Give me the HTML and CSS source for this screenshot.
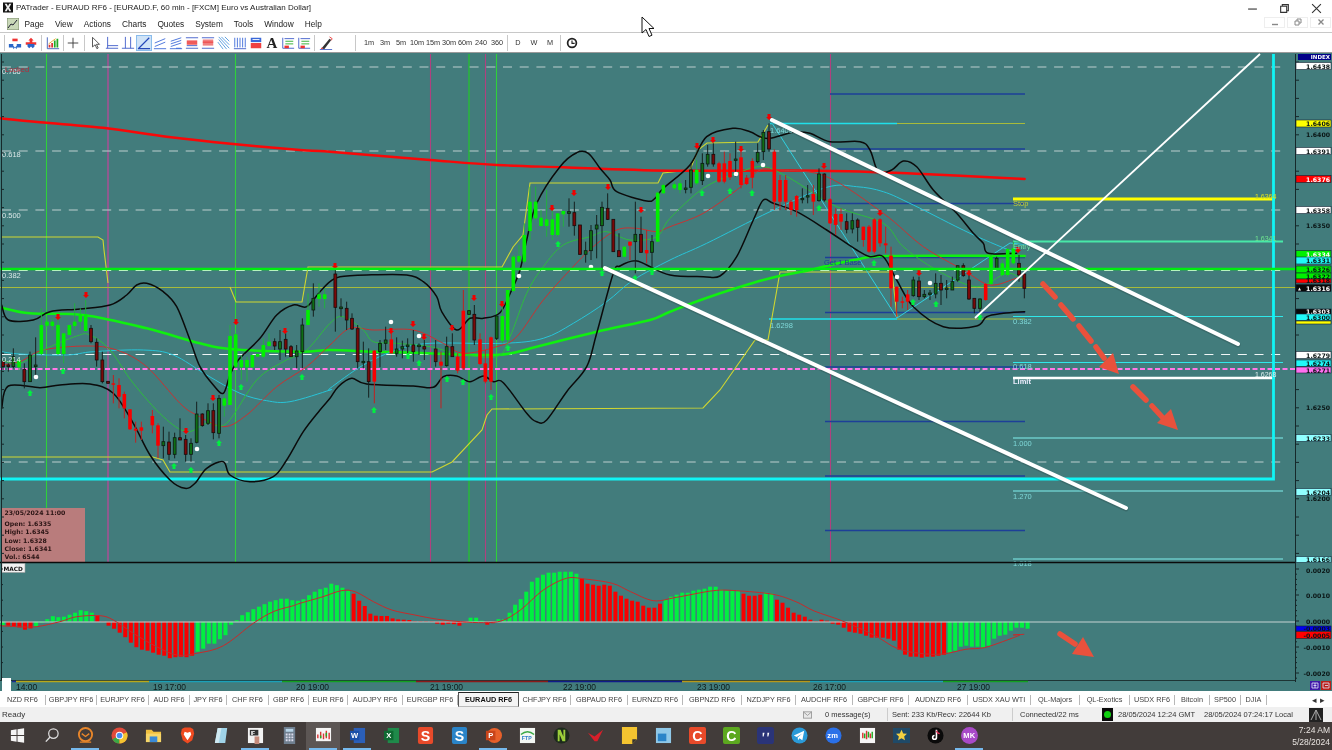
FILE: index.html
```html
<!DOCTYPE html>
<html lang="en">
<head>
<meta charset="utf-8">
<title>PATrader - EURAUD RF6</title>
<link rel="stylesheet" href="styles.css">
</head>
<body>
<div class="app">
  <header class="titlebar">
    <svg class="app-icon" viewBox="0 0 12 12"><rect width="12" height="12" fill="#111"/><path d="M2 1.5h2.6L6 4.4 7.4 1.5H10L7.4 6 10 10.5H7.4L6 7.6 4.6 10.5H2L4.6 6z" fill="#eee"/></svg>
    <span class="title-text">PATrader - EURAUD RF6 - [EURAUD.F, 60 min - [FXCM] Euro vs Australian Dollar]</span>
    <div class="win-ctrls">
      <svg viewBox="0 0 10 10" class="wc"><path d="M1 5.5h8" stroke="#333" stroke-width="1"/></svg>
      <svg viewBox="0 0 10 10" class="wc"><path d="M1.5 3h5.5v5.5H1.500zM3 3V1.500h5.500V7H7" fill="none" stroke="#333"/></svg>
      <svg viewBox="0 0 10 10" class="wc"><path d="M1 1l8 8M9 1l-8 8" stroke="#333" stroke-width="1"/></svg>
    </div>
  </header>

  <nav class="menubar">
    <svg class="menu-icon" viewBox="0 0 12 12"><rect width="12" height="12" fill="#c9d8b8" stroke="#7a8a6a"/><path d="M1 10l3-4 2 1 4-5" fill="none" stroke="#223" stroke-width="1"/></svg>
    <span class="menu-item">Page</span>
    <span class="menu-item">View</span>
    <span class="menu-item">Actions</span>
    <span class="menu-item">Charts</span>
    <span class="menu-item">Quotes</span>
    <span class="menu-item">System</span>
    <span class="menu-item">Tools</span>
    <span class="menu-item">Window</span>
    <span class="menu-item">Help</span>
    <div class="mdi-ctrls">
      <span class="mdi"><svg viewBox="0 0 8 8"><path d="M1 6.500h6" stroke="#888" stroke-width="1.400"/></svg></span>
      <span class="mdi"><svg viewBox="0 0 8 8"><path d="M1 3h4v4H1zM3 3V1h4v4H5" fill="none" stroke="#888"/></svg></span>
      <span class="mdi"><svg viewBox="0 0 8 8"><path d="M1.500 1.500l5 5M6.500 1.500l-5 5" stroke="#888" stroke-width="1.300"/></svg></span>
    </div>
  </nav>

  <div class="toolbar">
    <i class="sep s-first"></i>
    <span class="tb"><svg viewBox="0 0 16 16"><path d="M5 3h6v3H5z" fill="#e33"/><path d="M1 9h5v2l2 2-2 2v-2H1zM15 9h-5v2l-2 2 2 2v-2h5z" fill="#2a66c8"/></svg></span>
    <span class="tb"><svg viewBox="0 0 16 16"><path d="M8 2l3 3H9.500v2H14v3H2V7h4.500V5H5z" fill="#e33"/><path d="M4 9h8v3l-2 2-2-2-2 2-2-2z" fill="#2a66c8"/></svg></span>
    <i class="sep s-a"></i>
    <span class="tb"><svg viewBox="0 0 16 16"><path d="M1.500 1.500V14.500H15" fill="none" stroke="#3a58b8"/><path d="M3 13V10h2v3zM6 13V8h2v5z" fill="#d33"/><path d="M9 13V5h2v8zM12 13V3h2v10z" fill="#2a2"/><path d="M3 9l4-3 4-3" stroke="#e8a020" fill="none"/></svg></span>
    <i class="sep s-b"></i>
    <span class="tb"><svg viewBox="0 0 16 16"><path d="M8 2v12M2 8h12" stroke="#333" stroke-width="1"/></svg></span>
    <i class="sep s-c"></i>
    <span class="tb"><svg viewBox="0 0 16 16"><path d="M4 1.500v11l3-2.500 2 4.500 1.500-.8-2-4.200h3.500z" fill="#fff" stroke="#444"/></svg></span>
    <span class="tb"><svg viewBox="0 0 16 16"><path d="M3 1v13M3 11h12M1 14h14" fill="none" stroke="#3a58c8"/></svg></span>
    <span class="tb"><svg viewBox="0 0 16 16"><path d="M5 1v13M11 1v13M1 14h14" fill="none" stroke="#3a58c8"/></svg></span>
    <span class="tb tb-on"><svg viewBox="0 0 16 16"><path d="M2 14L14 2M1 14.500h14" fill="none" stroke="#2448b8" stroke-width="1.400"/></svg></span>
    <span class="tb"><svg viewBox="0 0 16 16"><path d="M2 8l12-5M2 12l12-5M1 14.500h14" fill="none" stroke="#3a68d8"/></svg></span>
    <span class="tb"><svg viewBox="0 0 16 16"><path d="M2 6l12-4M2 9l12-4M2 12l12-4M8 14h6M1 14.500h14" fill="none" stroke="#3a68d8"/></svg></span>
    <span class="tb"><svg viewBox="0 0 16 16"><path d="M1 2h14M1 14h14" stroke="#3a58c8"/><path d="M2 5h12v5H2z" fill="#ef5a5a"/><path d="M2 11h12" stroke="#3a58c8"/></svg></span>
    <span class="tb"><svg viewBox="0 0 16 16"><path d="M1 2h14M1 14h14" stroke="#3a58c8"/><path d="M2 4h12v7H2z" fill="#f08080"/><path d="M2 7h12" stroke="#e33"/></svg></span>
    <span class="tb"><svg viewBox="0 0 16 16"><path d="M2 4l9 11M2 1l12 13M5 1l9 9M9 1l5 5M1 7l6 8" fill="none" stroke="#3a8ad8" stroke-width=".9"/></svg></span>
    <span class="tb"><svg viewBox="0 0 16 16"><path d="M2 2v11M5 2v11M8 2v11M11 2v11M14 2v11" stroke="#3a68d8"/><path d="M1 14.500h14" stroke="#3a58c8"/></svg></span>
    <span class="tb"><svg viewBox="0 0 16 16"><path d="M2 2h12v5H2z" fill="#3a68d8"/><path d="M2 8h12v6H2z" fill="#ef4040"/><path d="M4 4h8" stroke="#fff"/></svg></span>
    <span class="tb"><span class="tb-a">A</span></span>
    <span class="tb"><svg viewBox="0 0 16 16"><path d="M2 2v12h13M4 3h11" fill="none" stroke="#3a58c8"/><path d="M5 6h9" stroke="#2a2"/><path d="M5 9h9" stroke="#2a2"/><path d="M4 11h5v3H4z" fill="#e33"/></svg></span>
    <span class="tb"><svg viewBox="0 0 16 16"><path d="M2 2v12h13M4 3h11" fill="none" stroke="#3a58c8"/><path d="M5 6h9M5 9h9" stroke="#2a2"/><path d="M4 11h5v3H4z" fill="#e33"/></svg></span>
    <i class="sep s-d"></i>
    <span class="tb"><svg viewBox="0 0 16 16"><path d="M3 14L12 3l2 1.500L6 15z" fill="#333"/><path d="M2 15l1-2 2 1.500z" fill="#e33"/><path d="M12 1l3 2-1 2" fill="none" stroke="#e33"/><path d="M1 15.500h14" stroke="#3a58c8"/></svg></span>
    <i class="sep s-e"></i>
    <span class="tf">1m</span><span class="tf">3m</span><span class="tf">5m</span><span class="tf">10m</span><span class="tf">15m</span><span class="tf">30m</span><span class="tf">60m</span><span class="tf">240</span><span class="tf">360</span>
    <i class="sep s-f"></i>
    <span class="tf">D</span><span class="tf">W</span><span class="tf">M</span>
    <i class="sep s-g"></i>
    <span class="tb"><svg viewBox="0 0 16 16"><circle cx="8" cy="8" r="5" fill="none" stroke="#222" stroke-width="2"/><path d="M8 5v3.500h3" fill="none" stroke="#222" stroke-width="1.300"/></svg></span>
  </div>

  <main class="chart-wrap">
    <svg id="chart" class="chart" viewBox="0 53 1332 638" width="1332" height="638">
      <g id="grid-lines">
        <line class="v-green" x1="46.500" y1="54" x2="46.500" y2="562"/>
        <line class="v-purple wide" x1="108" y1="54" x2="108" y2="562"/>
        <line class="v-green" x1="235.500" y1="54" x2="235.500" y2="562"/>
        <line class="v-purple" x1="430.500" y1="54" x2="430.500" y2="562"/>
        <line class="v-green wide" x1="469" y1="54" x2="469" y2="562"/>
        <line class="v-purple" x1="485.500" y1="54" x2="485.500" y2="562"/>
        <line class="v-green" x1="496.500" y1="54" x2="496.500" y2="562"/>
        <line class="v-purple" x1="830.500" y1="54" x2="830.500" y2="562"/>

        <line class="dash" x1="2" y1="67" x2="1281" y2="67"/>
        <line class="dash" x1="2" y1="151" x2="1281" y2="151"/>
        <line class="dash" x1="2" y1="210" x2="1281" y2="210"/>
        <line class="dash bright" x1="2" y1="270.500" x2="1281" y2="270.500"/>
        <line class="dash bright" x1="2" y1="354.500" x2="1281" y2="354.500"/>
        <line class="dash" x1="2" y1="462" x2="1281" y2="462"/>

        <line class="blue" x1="830" y1="94" x2="1025" y2="94"/>
        <line class="blue" x1="837" y1="149" x2="1025" y2="149"/>
        <line class="blue" x1="830" y1="203.500" x2="1025" y2="203.500"/>
        <line class="blue" x1="825" y1="257.500" x2="1025" y2="257.500"/>
        <line class="blue" x1="825" y1="312.500" x2="1025" y2="312.500"/>
        <line class="blue" x1="825" y1="367" x2="1025" y2="367"/>
        <line class="blue" x1="825" y1="421.500" x2="1025" y2="421.500"/>
        <line class="blue" x1="825" y1="476" x2="1025" y2="476"/>
        <line class="blue" x1="825" y1="530.500" x2="1025" y2="530.500"/>

        <line class="olive" x1="0" y1="287.500" x2="1295" y2="287.500"/>
        <line class="olive" x1="897" y1="123.500" x2="1025" y2="123.500"/>
        <line class="olive" x1="897" y1="319" x2="1025" y2="319"/>
        <line class="cyan-2" x1="770" y1="123.500" x2="897" y2="123.500"/>
        <line class="cyan-2" x1="769" y1="319" x2="897" y2="319"/>

        <line class="fib-bright" x1="1013" y1="241.500" x2="1283" y2="241.500"/>
        <line class="fib" x1="1013" y1="316.500" x2="1283" y2="316.500"/>
        <line class="fib" x1="1013" y1="362.500" x2="1283" y2="362.500"/>
        <line class="fib pale" x1="1013" y1="438" x2="1283" y2="438"/>
        <line class="fib pale" x1="1013" y1="491" x2="1283" y2="491"/>
        <line class="fib pale" x1="1013" y1="559" x2="1283" y2="559"/>

        <line class="pink" x1="0" y1="369" x2="1295" y2="369"/>
        <line class="yellow-fat" x1="1013" y1="199" x2="1275" y2="199"/>
        <line class="white-fat" x1="1013" y1="378" x2="1275" y2="378"/>
        <path class="cyan-box" d="M0 479H1273.500V54"/>
      </g>

      <polyline class="yl" points="2,237 98,237 103,240 104,250 108,283"/>
      <polyline class="yl" points="230,287 236,302 302,302 308,267 502,267 513,247 523,235 530,183 658,183 663,173 690,170 698,150 707,143 758,142 768,125"/>
      <polyline class="yl" points="2,457 153,457 163,460 170,472 432,472 452,462 482,430 487,415 492,409 703,408 720,390 755,340 768,340 780,272 887,272 892,272 897,317"/>
      <polyline class="zig" points="770,120 897,318 1010,243 1030,245"/>

      <g id="marks"></g>

      <line class="fat-green" x1="0" y1="269" x2="1295" y2="269"/>

      <text class="fib-t" x="1013" y="324">0.382</text>
      <text class="fib-t" x="1013" y="369">0.618</text>
      <text class="fib-t" x="1013" y="446">1.000</text>
      <text class="fib-t" x="1013" y="499">1.270</text>
      <text class="fib-t" x="1013" y="566">1.618</text>
      <text class="fib-t" x="770" y="328">1.6298</text>
      <text class="fib-t" x="770" y="133">1.6406</text>
      <text class="lev-t" x="2" y="74">0.786</text>
      <text class="locked" x="5" y="72">Locked</text>
      <text class="lev-t" x="2" y="157">0.618</text>
      <text class="lev-t" x="2" y="218">0.500</text>
      <text class="lev-t" x="2" y="278">0.382</text>
      <text class="lev-t" x="2" y="362">0.214</text>
      <text class="stop-t" x="1013" y="206">Stop</text>
      <text class="lim-t" x="1013" y="384">Limit</text>
      <text class="base-t" x="824" y="265">Get 1 Base</text>
      <text class="entry-t" x="1013" y="249">Entry</text>
      <text class="yel-t" x="1255" y="199">1.6364</text>
      <text class="grn-t" x="1255" y="241">1.6341</text>
      <text class="wht-t" x="1255" y="377">1.6268</text>

      <g id="overlay">
        <line class="trend-sh" x1="772" y1="121" x2="1238" y2="345"/>
        <line class="trend-sh" x1="605" y1="269" x2="1126" y2="509"/>
        <line class="trend" x1="772" y1="120" x2="1238" y2="344"/>
        <line class="trend" x1="605" y1="268" x2="1126" y2="508"/>
        <line class="trend-thin" x1="975" y1="318" x2="1260" y2="54"/>
        <line class="red-shaft" x1="1043" y1="284" x2="1055" y2="297"/>
        <line class="red-shaft" x1="1061" y1="305" x2="1073" y2="319"/>
        <line class="red-shaft" x1="1079" y1="326" x2="1091" y2="341"/>
        <line class="red-shaft" x1="1096" y1="347" x2="1104" y2="358"/>
        <polygon class="red-head" points="1119,374 1099,367 1113,353"/>
        <line class="red-shaft" x1="1133" y1="387" x2="1146" y2="400"/>
        <line class="red-shaft" x1="1152" y1="406" x2="1163" y2="418"/>
        <polygon class="red-head" points="1178,430 1157,423 1171,409"/>
        <line class="red-shaft" x1="1060" y1="634" x2="1075" y2="644"/>
        <polygon class="red-head" points="1094,657 1072,654 1083,637"/>
      </g>

      <rect class="info-box" x="2" y="508" width="83" height="54"/>
      <text class="info-t" x="4.500" y="514.500">23/05/2024 11:00</text>
      <text class="info-t" x="4.500" y="525.500">Open: 1.6335</text>
      <text class="info-t" x="4.500" y="534">High: 1.6345</text>
      <text class="info-t" x="4.500" y="542.500">Low: 1.6328</text>
      <text class="info-t" x="4.500" y="550.500">Close: 1.6341</text>
      <text class="info-t" x="4.500" y="559">Vol.: 6544</text>

      <line class="pane-line" x1="0" y1="562.500" x2="1295" y2="562.500"/>
      <rect class="macd-box" x="2" y="563.500" width="23" height="9"/>
      <text class="macd-t" x="3.500" y="570.500">MACD</text>

      <line class="axis" x1="1295.500" y1="54" x2="1295.500" y2="682"/>
      <line class="axis" x1="1.500" y1="54" x2="1.500" y2="680"/>
      <g id="ticks"></g>

      <rect class="p-index" x="1298" y="54" width="33" height="6"/><text class="p-t t-wh small" x="1330" y="59.300">INDEX</text>
      <rect class="p-b b-white" x="1296" y="62.500" width="35" height="7"/><text class="p-t" x="1330" y="68.500">1.6438</text>
      <rect class="p-b b-yellow" x="1296" y="120" width="35" height="7"/><text class="p-t" x="1330" y="126">1.6406</text>
      <text class="p-t" x="1330" y="137">1.6400</text>
      <rect class="p-b b-white" x="1296" y="147.500" width="35" height="7"/><text class="p-t" x="1330" y="153.500">1.6391</text>
      <rect class="p-b b-red" x="1296" y="175.500" width="35" height="7"/><text class="p-t t-wh" x="1330" y="181.500">1.6376</text>
      <rect class="p-b b-white" x="1296" y="206.500" width="35" height="7"/><text class="p-t" x="1330" y="212.500">1.6358</text>
      <text class="p-t" x="1330" y="228">1.6350</text>
      <rect class="p-b b-green" x="1296" y="250.500" width="35" height="7"/><text class="p-t t-wh" x="1330" y="256.500">1.6334</text>
      <rect class="p-b b-cyan" x="1296" y="257" width="35" height="7"/><text class="p-t" x="1330" y="263">1.6331</text>
      <rect class="p-b b-green" x="1296" y="266" width="35" height="7"/><text class="p-t" x="1330" y="272">1.6326</text>
      <rect class="p-b b-green" x="1296" y="273" width="35" height="6"/><text class="p-t" x="1330" y="278.500">1.6322</text>
      <rect class="p-b b-red" x="1296" y="279" width="35" height="4"/><text class="p-t" x="1330" y="283">1.6318</text>
      <rect class="p-b b-black" x="1296" y="284.500" width="35" height="7"/><text class="p-t t-wh" x="1330" y="290.500">1.6316</text>
      <path class="bell" d="M1298 290.500l1.500-3 1.500 3z"/>
      <rect class="p-b b-black" x="1296" y="309" width="35" height="5"/><text class="p-t t-wh" x="1330" y="314">1.6303</text>
      <rect class="p-b b-cyan" x="1296" y="314" width="35" height="6.500"/><text class="p-t" x="1330" y="320">1.6300</text>
      <rect class="p-b b-yellow" x="1296" y="321" width="35" height="3"/>
      <rect class="p-b b-white" x="1296" y="351.500" width="35" height="7"/><text class="p-t" x="1330" y="357.500">1.6279</text>
      <rect class="p-b b-cyan" x="1296" y="360" width="35" height="6.500"/><text class="p-t" x="1330" y="366">1.6274</text>
      <rect class="p-b b-pink" x="1296" y="367" width="35" height="6"/><text class="p-t" x="1330" y="372.500">1.6271</text>
      <text class="p-t" x="1330" y="410">1.6250</text>
      <rect class="p-b b-pale" x="1296" y="434.500" width="35" height="7"/><text class="p-t" x="1330" y="440.500">1.6233</text>
      <rect class="p-b b-pale" x="1296" y="488.500" width="35" height="7"/><text class="p-t" x="1330" y="494.500">1.6204</text>
      <text class="p-t" x="1330" y="501">1.6200</text>
      <rect class="p-b b-pale" x="1296" y="556.500" width="35" height="6"/><text class="p-t" x="1330" y="562">1.6166</text>
      <text class="p-t" x="1330" y="572.500">0.0020</text>
      <text class="p-t" x="1330" y="598">0.0010</text>
      <text class="p-t" x="1330" y="624">0.0000</text>
      <rect class="p-b b-blue" x="1296" y="626" width="35" height="5"/><text class="p-t" x="1330" y="631">-0.0003</text>
      <rect class="p-b b-red" x="1296" y="631.500" width="35" height="7"/><text class="p-t" x="1330" y="637.500">-0.0005</text>
      <text class="p-t" x="1330" y="650">-0.0010</text>
      <text class="p-t" x="1330" y="676">-0.0020</text>

      <line class="time-line" x1="0" y1="680.500" x2="1295" y2="680.500"/>
      <g id="strip"></g>
      <rect class="corner-box" x="2" y="678" width="9" height="13"/>
      <text class="time-t" x="16" y="690">14:00</text>
      <text class="time-t" x="153" y="690">19 17:00</text>
      <text class="time-t" x="296" y="690">20 19:00</text>
      <text class="time-t" x="430" y="690">21 19:00</text>
      <text class="time-t" x="563" y="690">22 19:00</text>
      <text class="time-t" x="697" y="690">23 19:00</text>
      <text class="time-t" x="813" y="690">26 17:00</text>
      <text class="time-t" x="957" y="690">27 19:00</text>
      <rect class="mini-blue" x="1310" y="681" width="10" height="9"/>
      <rect class="mini-red" x="1321" y="681" width="10" height="9"/>
      <path class="mini-ic" d="M1312 683h6v5h-6zM1315 683v5M1313.500 685.500h3M1323 683h6v5h-6zM1325 685.500h3"/>
    </svg>
  </main>

  <div class="tabs">
    <span class="tab">NZD RF6</span><span class="tab">GBPJPY RF6</span><span class="tab">EURJPY RF6</span><span class="tab">AUD RF6</span><span class="tab">JPY RF6</span><span class="tab">CHF RF6</span><span class="tab">GBP RF6</span><span class="tab">EUR RF6</span><span class="tab">AUDJPY RF6</span><span class="tab">EURGBP RF6</span><span class="tab tab-on">EURAUD RF6</span><span class="tab">CHFJPY RF6</span><span class="tab">GBPAUD RF6</span><span class="tab">EURNZD RF6</span><span class="tab">GBPNZD RF6</span><span class="tab">NZDJPY RF6</span><span class="tab">AUDCHF RF6</span><span class="tab">GBPCHF RF6</span><span class="tab">AUDNZD RF6</span><span class="tab">USDX XAU WTI</span><span class="tab">QL-Majors</span><span class="tab">QL-Exotics</span><span class="tab">USDX RF6</span><span class="tab">Bitcoin</span><span class="tab">SP500</span><span class="tab">DJIA</span>
    <span class="tab-arrows">◂ ▸</span>
  </div>

  <footer class="status">
    <span class="st-ready">Ready</span>
    <svg class="st-env" viewBox="0 0 10 8"><rect x=".5" y=".5" width="9" height="7" fill="#e8e8e8" stroke="#999"/><path d="M.5.500l4.500 4 4.500-4" fill="none" stroke="#999"/></svg>
    <span class="st-msg">0 message(s)</span>
    <span class="st-sent">Sent: 233 Kb/Recv: 22644 Kb</span>
    <span class="st-conn">Connected/22 ms</span>
    <span class="st-dot"><i></i></span>
    <span class="st-gmt">28/05/2024 12:24 GMT</span>
    <span class="st-local">28/05/2024 07:24:17 Local</span>
    <svg class="st-ic" viewBox="0 0 14 14"><rect width="14" height="14" fill="#222"/><path d="M7 2L2 12M7 2l5 10M7 2v10" stroke="#aaa" fill="none"/></svg>
  </footer>

  <div class="taskbar">
    <span class="task"><svg viewBox="0 0 18 18"><path d="M2 3.500l6-1v6H2zM9 2.300l7-1.100v7.300H9zM2 9.500h6v6l-6-1zM9 9.500h7v7.300l-7-1.100z" fill="#f4f4f4"/></svg></span>
    <span class="task"><svg viewBox="0 0 18 18"><circle cx="11" cy="7" r="5" fill="none" stroke="#ddd" stroke-width="1.300"/><path d="M7.500 10.500L3 15.500" stroke="#ddd" stroke-width="1.500"/></svg></span>
    <span class="task on"><svg viewBox="0 0 18 18"><circle cx="9" cy="8" r="7" fill="none" stroke="#e8862a" stroke-width="2"/><path d="M5 7l4 3 4-3M3 16h12" fill="none" stroke="#e8862a" stroke-width="1.500"/></svg></span>
    <span class="task"><svg viewBox="0 0 18 18"><circle cx="9" cy="9" r="8.500" fill="#e04a3a"/><path d="M9 9L1.500 13A8.500 8.500 0 0 0 9 17.500z" fill="#3aa845"/><path d="M9 9l7.800-3.500A8.500 8.500 0 0 1 9 17.500z" fill="#f4c430"/><circle cx="9" cy="9" r="4" fill="#fff"/><circle cx="9" cy="9" r="3" fill="#4a8cf0"/></svg></span>
    <span class="task"><svg viewBox="0 0 18 18"><path d="M1 3h6l2 2h8v11H1z" fill="#f0c040"/><path d="M1 7h16v9H1z" fill="#f7d668"/><path d="M5 10h8v6H5z" fill="#3a8ad8"/></svg></span>
    <span class="task"><svg viewBox="0 0 18 18"><path d="M3 2l3-1.500h6L15 2l1 5-2 7-5 3.500L4 14 2 7z" fill="#ef4a20"/><path d="M6 5l3 1 3-1 1 3-2 3-2 3-2-3-2-3z" fill="#fff"/></svg></span>
    <span class="task"><svg viewBox="0 0 18 18"><path d="M5 1h10l-2 16H2z" fill="#9fd3e8"/><path d="M5 1l-3 16 4 0 3-16z" fill="#cfe9f2"/></svg></span>
    <span class="task on"><svg viewBox="0 0 18 18"><rect x="1" y="1" width="16" height="16" fill="#f2f2f2"/><rect x="3" y="3" width="9" height="6" fill="#333"/><text class="ic-t dark" x="4" y="8">IF</text><path d="M8 10h5v8H8z" fill="#c58a7a"/></svg></span>
    <span class="task"><svg viewBox="0 0 18 18"><rect x="3" y="0" width="12" height="18" fill="#6f7f8f"/><rect x="5" y="2" width="8" height="3" fill="#b8d4e8"/><path d="M5 7h2v2H5zM8 7h2v2H8zM11 7h2v2h-2zM5 10h2v2H5zM8 10h2v2H8zM11 10h2v2h-2zM5 13h2v2H5zM8 13h2v2H8zM11 13h2v2h-2z" fill="#dde"/></svg></span>
    <span class="task on lit"><svg viewBox="0 0 18 18"><rect x="1" y="1" width="16" height="14" fill="#f5f5f5"/><path d="M3 12V8M6 12V5M9 13V7M12 12V4M15 13V6" stroke="#d33" stroke-width="1.500"/><path d="M6 12V9M12 10V6" stroke="#2a2" stroke-width="1.500"/></svg></span>
    <span class="task on"><svg viewBox="0 0 18 18"><rect x="5" y="1" width="12" height="16" fill="#2b5fb8"/><rect x="1" y="4" width="10" height="10" fill="#1a4fa8"/><text class="ic-t" x="2" y="12">W</text></svg></span>
    <span class="task"><svg viewBox="0 0 18 18"><rect x="5" y="1" width="12" height="16" fill="#1f8a4a"/><rect x="1" y="4" width="10" height="10" fill="#0f6a32"/><text class="ic-t" x="3.500" y="12">X</text></svg></span>
    <span class="task"><svg viewBox="0 0 18 18"><rect x="1" y="0" width="16" height="18" rx="2" fill="#e84a2a"/><text class="ic-big" x="4" y="15">S</text></svg></span>
    <span class="task"><svg viewBox="0 0 18 18"><rect x="1" y="0" width="16" height="18" rx="2" fill="#2a84c8"/><text class="ic-big" x="4" y="15">S</text></svg></span>
    <span class="task on"><svg viewBox="0 0 18 18"><circle cx="10" cy="9" r="8" fill="#e8602a"/><rect x="1" y="4" width="10" height="10" fill="#c8441a"/><text class="ic-t" x="3.500" y="12">P</text></svg></span>
    <span class="task"><svg viewBox="0 0 18 18"><rect x="1" y="1" width="16" height="16" fill="#f2f6f2"/><path d="M2 8q7-6 14 0" fill="none" stroke="#3aa845" stroke-width="1.500"/><text class="ic-s" x="3" y="14">FTP</text></svg></span>
    <span class="task"><svg viewBox="0 0 18 18"><circle cx="9" cy="9" r="8.500" fill="#1c2a1c"/><path d="M5 3l5 12h3L8 3zM5 3v12h2V6zM13 15V3h-2v9z" fill="#9ccf3a"/></svg></span>
    <span class="task"><svg viewBox="0 0 18 18"><path d="M1 6l7 4 9-7-6 12-3 0z" fill="#d81f2a"/></svg></span>
    <span class="task"><svg viewBox="0 0 18 18"><path d="M1 0h16v13l-5 5H1z" fill="#f4c430"/><path d="M12 18v-5h5z" fill="#333"/></svg></span>
    <span class="task"><svg viewBox="0 0 18 18"><rect x="1" y="1" width="16" height="16" fill="#8fc8e8"/><rect x="3" y="7" width="9" height="8" fill="#2a84c8"/></svg></span>
    <span class="task"><svg viewBox="0 0 18 18"><rect x="0" y="0" width="18" height="18" rx="2" fill="#e84a2a"/><text class="ic-big" x="3.500" y="15">C</text></svg></span>
    <span class="task"><svg viewBox="0 0 18 18"><rect x="0" y="0" width="18" height="18" rx="2" fill="#5ca81f"/><text class="ic-big" x="3.500" y="15">C</text></svg></span>
    <span class="task"><svg viewBox="0 0 18 18"><rect x="0" y="0" width="18" height="18" rx="3" fill="#2a3478"/><path d="M6 6h2l-1 4H6zM11 6h2l-1 4h-1z" fill="#fff"/></svg></span>
    <span class="task"><svg viewBox="0 0 18 18"><circle cx="9" cy="9" r="8.500" fill="#2a9ad8"/><path d="M3 9l11-5-2 10-3-2-1.500 2-.5-3 5-4-6 3.500z" fill="#fff"/></svg></span>
    <span class="task"><svg viewBox="0 0 18 18"><circle cx="9" cy="9" r="8.500" fill="#2a70e8"/><text class="ic-t" x="2.500" y="12">zm</text></svg></span>
    <span class="task"><svg viewBox="0 0 18 18"><rect x="1" y="1" width="16" height="16" fill="#f5f5f5"/><path d="M4 12V6M8 13V4M12 12V7" stroke="#d33" stroke-width="1.500"/><path d="M6 12V7M10 11V5M14 12V5" stroke="#2a2" stroke-width="1.500"/></svg></span>
    <span class="task"><svg viewBox="0 0 18 18"><rect x="0" y="1" width="18" height="16" fill="#1f4a68"/><path d="M9 3l1.800 3.800 4 .4-3 2.800.9 4L9 12l-3.700 2 .9-4-3-2.800 4-.4z" fill="#f4d040"/></svg></span>
    <span class="task"><svg viewBox="0 0 18 18"><circle cx="9" cy="9" r="8.500" fill="#0a0a0a"/><path d="M10 3v8a2 2 0 1 1-2-2" fill="none" stroke="#fff" stroke-width="1.700"/><path d="M10 4q1 3 3.500 3" fill="none" stroke="#e0305a" stroke-width="1.200"/></svg></span>
    <span class="task on"><svg viewBox="0 0 18 18"><circle cx="9" cy="9" r="9" fill="#a84ac8"/><text class="ic-t" x="2.500" y="11.500">MK</text></svg></span>
    <div class="clock"><span>7:24 AM</span><span>5/28/2024</span></div>
  </div>

  <svg class="cursor" viewBox="0 0 14 22"><path d="M1 1v16l4-3.500 3 7 3-1.300-3-6.700h5z" fill="#fff" stroke="#111"/></svg>
</div>
<script src="chart.js"></script>
</body>
</html>
```
FILE: styles.css
```css
* { box-sizing: border-box; }
html, body { margin: 0; padding: 0; background: #fff; }
body { font-family: "Liberation Sans", Arial, sans-serif; color: #222; }
.app { position: relative; width: 1332px; height: 750px; overflow: hidden; display: flex; flex-direction: column; background: #fff; filter: blur(.25px); }

.titlebar { height: 15px; display: flex; align-items: center; padding-left: 3px; font-size: 8px; }
.app-icon { width: 10px; height: 11px; margin-right: 3px; }
.title-text { white-space: nowrap; }
.win-ctrls { margin-left: auto; display: flex; gap: 21px; padding-right: 10.500px; padding-top: 1px; }
.wc { width: 11px; height: 11px; }

.menubar { height: 18px; display: flex; align-items: center; padding-left: 7px; font-size: 8.300px; border-bottom: 1px solid #c8c8c8; }
.menu-icon { width: 12px; height: 12px; margin-right: 5.500px; }
.menu-item { margin-right: 11px; }
.mdi-ctrls { margin-left: auto; display: flex; gap: 2px; padding-right: 1px; padding-bottom: 3px; }
.mdi { width: 21px; height: 11px; border: 1px solid #eee; display: flex; align-items: center; justify-content: center; }
.mdi svg { width: 8px; height: 8px; }

.toolbar { height: 20px; display: flex; align-items: center; padding-left: 4px; background: #fff; border-bottom: 1px solid #9a9a9a; }
.tb { width: 16px; height: 16px; display: flex; align-items: center; justify-content: center; font-family: "Liberation Serif", serif; }
.tb svg { width: 14px; height: 14px; }
.tb-on { background: #cfe3f7; outline: 1px solid #8abcec; outline-offset: -1px; }
.tb-a { font-weight: 700; font-size: 15px; color: #222; line-height: 16px; }
.tf { width: 16px; text-align: center; font-size: 7.300px; color: #333; white-space: nowrap; }
.sep { width: 1px; height: 16px; background: #c8c8c8; display: block; }
.s-first { margin-right: 2px; }
.s-a { margin: 0 3px 0 2px; }
.s-b { margin: 0 1px 0 2px; }
.s-c { margin: 0 3px 0 3px; }
.s-d { margin: 0 3px 0 2px; }
.s-e { margin: 0 5px 0 21px; }
.s-f { margin: 0 2px 0 2px; }
.s-g { margin: 0 3px 0 2px; }

.chart-wrap { height: 638px; background: #427c7c; line-height: 0; }
.chart { display: block; }

.v-green { stroke: #2fd03a; stroke-width: 1.100; }
.v-purple { stroke: #b0407f; stroke-width: 1.100; }
.v-green.wide { stroke-width: 1.500; stroke: #28b83a; }
.v-purple.wide { stroke-width: 2; stroke: #8f5a8f; }
.dash { stroke: #bccece; stroke-width: 1.100; stroke-dasharray: 9 7.700; fill: none; }
.dash.bright { stroke: #f0f6f6; }
.blue { stroke: #1d3f98; stroke-width: 1.300; }
.olive { stroke: #a8bb3a; stroke-width: 1.100; }
.cyan-2 { stroke: #20e0ea; stroke-width: 1.500; }
.fib { stroke: #2fe8ea; stroke-width: 1.200; }
.fib.pale { stroke: #80f0ee; }
.fib-bright { stroke: #48e8a8; stroke-width: 1.800; }
.pink { stroke: #ff78e8; stroke-width: 2; stroke-dasharray: 5 2.500; }
.yellow-fat { stroke: #ffff00; stroke-width: 3; }
.white-fat { stroke: #fff; stroke-width: 2.500; }
.cyan-box { fill: none; stroke: #10f4f4; stroke-width: 2.800; }
.fat-green { stroke: #00ee10; stroke-width: 2.500; }
.yl { fill: none; stroke: #d0d730; stroke-width: 1.100; }
.zig { fill: none; stroke: #30d0e0; stroke-width: 1; }
.ma { fill: none; stroke-linejoin: round; stroke-linecap: round; }
.band { stroke: #0b0b0b; stroke-width: 1.500; }
.ma-teal { stroke: #28c4d8; stroke-width: 1; }
.ma-red { stroke: #c83232; stroke-width: 1; }
.ma-green { stroke: #2ebb3e; stroke-width: 1; }
.ma-fat { stroke: #10f010; stroke-width: 2.600; }
.ma-long { stroke: #f80808; stroke-width: 2.400; }
.wick-g { stroke: #22b040; stroke-width: 1; }
.wick-r { stroke: #c22020; stroke-width: 1; }
.wick-k { stroke: #15201f; stroke-width: 1; }
.body-G { fill: #00f000; }
.body-R { fill: #f80000; }
.body-g { fill: #0e6e14; stroke: #0d1a12; stroke-width: .8; }
.body-r { fill: #7a0808; stroke: #1a0c0c; stroke-width: .8; }
.arrow-r { fill: #f00000; }
.arrow-g { fill: #00f040; }
.dot-w { fill: #fff; }
.trend { stroke: #fff; stroke-width: 4; stroke-linecap: round; }
.trend-sh { stroke: #2a4a4a; stroke-opacity: .35; stroke-width: 5; stroke-linecap: round; }
.trend-thin { stroke: #fff; stroke-width: 1.800; }
.red-shaft { stroke: #e9513c; stroke-width: 5.500; stroke-linecap: round; }
.red-head { fill: #e9513c; }

text { font-family: "Liberation Sans", Arial, sans-serif; }
.fib-t { fill: #7fd8d8; font-size: 7.500px; }
.lev-t { fill: #d8e6e6; font-size: 7.500px; }
.locked { fill: #b82a3a; font-size: 7.500px; }
.stop-t { fill: #c8cf30; font-size: 7.500px; }
.lim-t { fill: #eef; font-size: 7.500px; font-weight: 700; }
.base-t { fill: #1d3f98; font-size: 7.500px; }
.entry-t { fill: #70e8a8; font-size: 7.500px; }
.yel-t { fill: #d8e020; font-size: 7px; }
.grn-t { fill: #70e890; font-size: 7px; }
.wht-t { fill: #e0eeee; font-size: 7px; }
.info-box { fill: #b97c7c; }
.info-t { fill: #2a1414; font-family: "DejaVu Sans", sans-serif; font-weight: 700; font-size: 6.200px; }
.pane-line { stroke: #0a0a0a; stroke-width: 1.300; }
.macd-box { fill: #f2f2f2; stroke: #999; stroke-width: .6; }
.macd-t { fill: #111; font-family: "DejaVu Sans", sans-serif; font-weight: 700; font-size: 5.800px; }
.axis { stroke: #16282a; stroke-width: 1; }
.tick { stroke: #16282a; stroke-width: 1; }
.p-b { stroke: #123; stroke-width: .6; }
.p-index { fill: #000088; }
.b-white { fill: #fff; }
.b-yellow { fill: #ffff00; }
.b-red { fill: #ff0000; }
.b-green { fill: #00f000; }
.b-cyan { fill: #20f8f8; }
.b-pale { fill: #90ffff; }
.b-black { fill: #080808; }
.b-pink { fill: #ff70f0; }
.b-blue { fill: #0000f0; }
.p-t { fill: #0a1414; font-family: "DejaVu Sans", sans-serif; font-weight: 700; font-size: 6.200px; text-anchor: end; }
.t-wh { fill: #fff; }
.small { font-size: 5.500px; }
.bell { fill: #fff; }
.zero { stroke: #c6d2d2; stroke-width: 1.200; }
.macd-g { fill: #00f040; }
.macd-r { fill: #f80000; }
.signal { fill: none; stroke: #c82a2a; stroke-width: 1; stroke-linejoin: round; }
.time-line { stroke: #1d3434; stroke-width: 1; }
.time-t { fill: #0e1c1c; font-size: 8.500px; }
.corner-box { fill: #fff; }
.mini-blue { fill: #4018a8; }
.mini-red { fill: #b82018; }
.mini-ic { fill: none; stroke: #e8e8ff; stroke-width: .8; }

.tabs { height: 16px; display: grid; grid-template-columns: 46px 51px 52px 41px 37px 42px 40px 39px 55px 55px 61px 52px 57px 55px 59px 54px 57px 56px 59px 63px 49px 50px 45px 35px 31px 26px 1fr; align-items: center; background: #fff; font-size: 7.300px; color: #444; padding-left: 0; border-top: 1px solid #fff; }
.tab { text-align: center; white-space: nowrap; border-right: 1px solid #b8b8b8; line-height: 10px; }
.tab-on { background: #f4f4f4; font-weight: 700; color: #111; line-height: 13px; border: 1px solid #555; border-top-color: #222; border-bottom-color: #bbb; }
.tab-arrows { text-align: right; padding-right: 7px; font-size: 9px; color: #333; line-height: 10px; }

.status { height: 15px; display: flex; align-items: center; background: #f0f0f0; font-size: 7.500px; color: #333; position: relative; padding-left: 2px; white-space: nowrap; }
.st-ready { width: 801px; font-size: 8px; }
.st-env { width: 9px; height: 8px; margin-right: 13px; }
.st-msg { width: 63px; height: 13px; line-height: 13px; border-right: 1px solid #ccc; }
.st-sent { width: 125px; height: 13px; line-height: 13px; padding-left: 4px; border-right: 1px solid #ccc; }
.st-conn { width: 83px; padding-left: 7px; }
.st-dot { width: 22px; height: 13px; display: flex; justify-content: center; align-items: center; }
.st-dot i { width: 11px; height: 13px; background: #0a0a0a; display: flex; }
.st-dot i::after { content: ""; width: 7px; height: 7px; margin: 3px 2px; border-radius: 50%; background: #10d010; }
.st-gmt { width: 86px; padding-left: 0; }
.st-local { width: 101px; }
.st-ic { width: 14px; height: 14px; margin-left: 4px; }

.taskbar { height: 28px; background: #423c3a; display: flex; position: relative; }
.task { width: 34px; height: 28px; display: flex; align-items: center; justify-content: center; position: relative; padding-bottom: 2px; }
.task svg { width: 17px; height: 17px; }
.task.on::after { content: ""; position: absolute; left: 3px; right: 3px; bottom: 0; height: 2px; background: #76b9ed; }
.task.lit { background: #5c5654; }
.ic-t { fill: #fff; font-size: 8px; font-weight: 700; }
.ic-t.dark { fill: #fff; font-size: 5px; }
.ic-big { fill: #fff; font-size: 15px; font-weight: 700; }
.ic-s { fill: #2a7ac8; font-size: 5.500px; font-weight: 700; }
.clock { position: absolute; right: 2px; top: 2px; display: flex; flex-direction: column; align-items: flex-end; font-family: "Liberation Sans", Arial, sans-serif; font-size: 8.500px; line-height: 12px; color: #e8e4e0; }

.cursor { position: absolute; left: 641px; top: 16px; width: 14px; height: 22px; }
```
FILE: chart.js
```js
(function () {
  var NS = 'http://www.w3.org/2000/svg';
  var marks = document.getElementById('marks');
  function el(tag, attrs, parent) {
    var n = document.createElementNS(NS, tag);
    for (var k in attrs) n.setAttribute(k, attrs[k]);
    (parent || marks).appendChild(n);
    return n;
  }
  // Each crop of data is [originX, originY, scaleX, scaleY, pairs...]
  function conv(ox, oy, sx, sy, pts) {
    var out = [];
    for (var i = 0; i < pts.length; i += 2) out.push([ox + pts[i] / sx, oy + pts[i + 1] / sy]);
    return out;
  }
  function smooth(p) {
    var d = 'M' + p[0][0].toFixed(1) + ' ' + p[0][1].toFixed(1);
    for (var i = 0; i < p.length - 1; i++) {
      var a = p[i - 1] || p[i], b = p[i], c = p[i + 1], e = p[i + 2] || c;
      d += 'C' + (b[0] + (c[0] - a[0]) / 6).toFixed(1) + ' ' + (b[1] + (c[1] - a[1]) / 6).toFixed(1) + ' ' +
        (c[0] - (e[0] - b[0]) / 6).toFixed(1) + ' ' + (c[1] - (e[1] - b[1]) / 6).toFixed(1) + ' ' +
        c[0].toFixed(1) + ' ' + c[1].toFixed(1);
    }
    return d;
  }
  function three(a, b, c) {
    return conv(0, 250, 3, 3, a).concat(conv(330, 130, 3, 3, b), conv(670, 100, 3, 3, c));
  }
  var lines = [
    ['ma-long', conv(0, 55, 3, 3, [0,190,120,202,320,220,500,245,700,267,900,285,990,290]).concat(conv(330,130,3,3,[300,90,500,105,700,112,1020,122]), conv(670,100,3,3,[450,212,760,222,1064,237]))],
    ['ma-fat', three([5,173,90,190,250,195,440,235,600,280,690,297,900,305,990,300],[130,665,260,668,500,675,620,650,800,605,960,570,1020,545],[120,590,280,540,420,510,550,480,660,468,1064,468])],
    ['ma-teal', three([5,305,60,312,200,315,280,305,430,300,520,315,620,375,720,430,800,452,870,455,990,420],[0,775,100,705,200,660,300,640,520,640,640,625,730,580,830,515,910,450,1020,390],[110,430,300,335,470,262,560,260,640,275,730,315,900,400,1040,460])],
    ['ma-red', three([5,345,60,335,130,300,260,288,350,300,440,350,540,460,590,495,670,530,740,495,830,410,920,350,990,285],[60,595,130,600,250,600,340,640,400,670,500,650,560,620,640,510,720,420,790,350,860,300,920,295,980,305,1020,290],[100,340,200,270,270,210,330,210,470,230,640,340,760,440,880,510,960,555,1040,535,1060,540])],
    ['ma-green', three([5,330,60,340,130,300,230,258,270,255,330,300,400,400,490,500,560,545,620,520,680,520,770,390,850,335,920,300,990,220],[40,560,100,600,130,635,200,640,300,650,380,670,500,680,540,620,590,490,640,410,700,345,780,320,830,305,900,330,980,320,1020,265],[100,265,200,220,280,200,360,235,500,320,640,370,700,440,800,510,920,560,1010,520,1060,540])],
    ['band', three([5,475,25,408,120,413,180,405,270,402,340,430,400,520,450,615,510,690,555,715,585,700,620,655,670,635,690,675,750,695,820,680,860,630,910,545,960,480,990,445],[25,770,65,745,110,762,250,768,310,772,340,740,380,738,420,755,460,738,490,755,520,758,590,850,620,875,650,870,710,785,770,710,800,610,850,430,870,408,915,392,950,405,1020,435],[100,530,150,528,200,470,250,360,280,300,310,310,380,335,470,390,560,450,600,470,640,470,680,540,730,620,820,680,920,678,950,650,1000,640,1064,635])],
    ['band', three([5,165,25,210,100,210,150,185,240,177,330,165,380,135,410,105,440,100,490,125,530,170,570,270,600,350,640,405,670,430,690,375,715,330,780,265,830,195,880,165,920,170,960,125,990,95],[30,440,110,435,230,435,280,455,320,500,335,545,380,600,420,565,460,565,510,548,545,480,570,420,590,330,620,220,690,110,740,68,775,70,810,115,840,150,860,185,950,213,975,205,1000,175],[60,195,110,110,190,85,240,95,270,110,300,115,370,97,420,100,480,125,570,125,600,150,625,215,665,210,700,183,740,200,790,270,860,340,910,400,940,430,955,460,1040,460])]
  ];
  lines.forEach(function (l) { el('path', { d: smooth(l[1]), 'class': 'ma ' + l[0] }); });

  // Candles: type, x, high, top, bottom, low (crop coordinates)
  var c1 = ['r',9,330,335,350,360,'r',25,340,345,350,365,'g',40,295,320,350,355,'G',57,325,330,352,360,'r',73,340,358,395,415,'g',90,305,315,395,395,'g',107,262,345,350,380,'G',124,175,225,312,315,'G',141,200,215,227,230,'G',157,205,215,228,240,'G',174,205,225,312,315,'G',191,250,250,312,340,'G',208,225,225,255,255,'G',224,160,215,228,240,'G',241,175,193,215,240,'G',257,150,193,243,245,'r',273,225,235,275,280,'r',290,265,277,330,350,'r',307,305,330,395,400,'r',324,394,394,400,400,'R',340,375,400,404,460,'R',357,385,405,440,475,'R',373,425,432,475,505,'R',390,478,478,538,540,'R',407,515,536,542,578,'R',424,515,532,542,570,'R',457,480,498,526,550,'R',474,520,526,587,625,'g',490,530,575,587,625,'r',507,545,576,613,630,'g',524,548,563,613,625,'r',540,505,563,570,570,'r',557,555,568,613,635,'g',573,565,580,613,635,'g',590,455,492,577,580,'r',607,490,492,527,530,'g',624,460,482,520,525,'r',640,460,482,548,568,'g',657,435,445,550,565,'G',673,433,445,467,500,'G',690,225,258,465,465,'G',707,250,253,350,355,'G',724,315,330,352,390,'G',741,320,330,352,395,'G',757,315,315,352,352,'G',773,312,312,320,320,'G',790,265,285,320,325,'G',807,250,275,288,290,'r',824,265,275,288,300,'g',840,240,275,297,330,'r',857,250,268,297,320,'r',873,285,290,320,320,'g',890,285,303,320,355,'g',907,205,225,305,355,'G',924,130,180,225,225,'g',940,100,145,180,200,'G',957,100,133,147,170,'G',974,115,133,147,175];
  var c2 = ['r',16,420,432,532,605,'g',33,505,531,536,560,'r',50,515,535,570,600,'r',66,550,565,597,600,'r',83,585,596,695,715,'g',100,635,694,696,715,'r',116,655,695,755,803,'R',133,660,662,755,820,'g',150,630,640,665,712,'g',167,590,630,640,660,'R',184,610,628,670,670,'g',200,622,657,670,680,'g',217,632,650,657,685,'g',233,625,645,650,670,'r',250,600,645,665,695,'g',267,640,645,650,675,'r',283,630,650,657,690,'r',317,630,657,695,710,'R',333,665,695,707,835,'g',350,620,650,707,710,'r',367,610,650,680,680,'R',383,670,680,722,730,'R',400,480,542,715,720,'g',417,540,542,553,555,'r',433,525,553,630,645,'R',450,610,628,702,705,'R',466,660,700,755,760,'R',483,620,622,755,780,'g',500,558,558,625,630,'G',517,530,558,632,640,'G',533,480,480,630,635,'G',550,375,380,483,485,'G',567,345,378,395,400,'G',583,280,315,395,400,'G',600,170,215,303,330,'G',617,170,215,265,270,'G',633,240,263,288,290,'G',650,180,268,288,320,'G',667,240,268,315,330,'G',683,250,250,315,320,'G',700,243,243,253,290,'g',717,205,245,250,290,'r',733,215,248,287,317,'r',750,285,285,373,375,'g',767,335,362,373,398,'g',783,285,302,362,390,'g',800,255,285,297,385,'g',816,215,232,287,415,'r',833,190,235,268,270,'r',850,268,268,365,365,'r',867,310,362,380,380,'G',883,350,350,380,382,'R',900,335,335,347,390,'g',916,215,313,335,430,'r',933,260,313,367,367,'R',950,300,360,370,400,'g',966,315,335,367,420,'G',983,185,188,335,335,'G',1000,160,165,190,190];
  var c3 = ['G',13,245,253,265,270,'G',30,240,250,270,280,'g',47,240,264,267,280,'g',63,190,210,262,280,'G',80,180,210,250,255,'g',97,160,190,242,255,'g',113,135,163,192,200,'r',130,130,163,192,200,'R',147,185,190,245,248,'R',163,155,190,245,250,'R',180,160,183,232,240,'g',197,125,177,179,230,'R',213,150,172,255,265,'R',230,225,233,252,255,'R',247,175,183,233,265,'g',263,130,157,185,190,'g',280,90,97,155,180,'r',297,70,95,147,155,'R',313,148,155,305,330,'R',330,225,240,305,330,'R',347,225,240,305,330,'R',363,300,305,330,345,'R',380,285,288,330,350,'g',397,265,295,297,310,'g',413,255,287,289,310,'R',430,255,282,305,345,'g',447,205,222,302,305,'r',463,220,222,300,305,'R',480,295,298,370,372,'R',497,325,342,375,405,'R',513,325,342,365,390,'r',530,340,365,388,400,'g',547,340,362,387,400,'r',563,355,360,382,425,'R',580,380,380,420,440,'R',597,375,380,455,458,'R',613,355,358,455,460,'R',630,355,358,430,440,'R',647,380,430,436,460,'R',663,440,467,565,620,'R',680,560,560,605,650,'R',697,590,604,606,625,'R',713,570,583,605,630,'g',730,530,540,587,590,'r',747,530,543,590,600,'g',763,570,583,590,595,'g',780,570,579,581,600,'g',797,520,550,582,595,'r',813,525,550,570,615,'g',830,540,564,566,595,'g',847,530,545,570,570,'g',863,497,497,540,545,'r',880,490,497,527,530,'r',897,510,540,597,600,'r',913,595,595,625,640,'g',930,595,597,625,650,'R',947,550,552,600,602,'G',963,465,470,552,555,'g',980,470,475,505,510,'G',997,480,490,525,530,'G',1013,445,447,525,530,'G',1030,425,445,490,495,'r',1047,465,490,525,545,'r',1063,520,522,565,595];
  function candles(ox, oy, data) {
    for (var i = 0; i < data.length; i += 6) {
      var t = data[i], x = ox + data[i + 1] / 3, hi = oy + data[i + 2] / 3, top = oy + data[i + 3] / 3,
        bot = oy + data[i + 4] / 3, lo = oy + data[i + 5] / 3;
      var wc = t === 'G' ? 'wick-g' : t === 'R' ? 'wick-r' : 'wick-k';
      el('line', { x1: x, y1: hi, x2: x, y2: lo, 'class': wc });
      var w = t === 'G' || t === 'R' ? 3.6 : 2.8;
      el('rect', { x: x - w / 2, y: top, width: w, height: Math.max(bot - top, 1.4), 'class': 'body-' + t });
    }
  }
  candles(0, 250, c1); candles(330, 130, c2); candles(670, 100, c3);

  function down(x, y) { el('polygon', { points: [x-1.5,y-3,x+1.5,y-3,x+1.5,y,x+3,y,x,y+3,x-3,y,x-1.5,y].join(','), 'class': 'arrow-r' }); }
  function up(x, y) { el('polygon', { points: [x,y-3,x+3,y,x+1.5,y,x+1.5,y+3,x-1.5,y+3,x-1.5,y,x-3,y].join(','), 'class': 'arrow-g' }); }
  function dot(x, y) { el('circle', { cx: x, cy: y, r: 2.3, 'class': 'dot-w' }); }
  [[86,295],[58,317],[236,322],[285,331],[213,398],[186,431],[335,266],[391,331],[413,324],[424,337],[452,328],[474,298],[502,304],[552,208],[574,193],[608,187],[641,210],[697,146],[713,140],[741,149],[769,117],[824,166],[880,213],[919,273],[969,273],[1018,250]].forEach(function (p) { down(p[0], p[1]); });
  [[30,393],[63,371],[174,466],[191,470],[219,443],[241,387],[302,377],[374,410],[408,356],[419,363],[447,379],[463,382],[491,397],[508,348],[558,244],[602,273],[635,278],[652,272],[702,193],[730,191],[752,193],[819,208],[874,263],[913,302],[936,304],[980,317]].forEach(function (p) { up(p[0], p[1]); });
  [[36,377],[197,449],[391,322],[419,336],[519,276],[591,267],[708,176],[736,174],[763,165],[897,277],[930,283]].forEach(function (p) { dot(p[0], p[1]); });

  // MACD histogram: run of [colour, values...]; + is above the zero line
  var ticks = document.getElementById('ticks');
  var macd = [
    ['g',-4],['r',-4,-5,-5.7,-8,-6.7],['g',-5,-1,2.5,5.5,4.5,5,7,9,11.5,10.5,9],['r',6.5,.3,-4,-7,-11,-15.5,-21,-25.5,-28,-29,-31,-33,-34,-36.5,-35.5,-35,-35.5,-34],
    ['g',-30,-27,-22,-22,-17.5,-13.5,-3,1.5,6.5,9.5,12.5,15,17.5,20,21.5,23,23,21.5,21,22.5,26.5,30,32.5,34,38,36.5,34,31],
    ['r',28,21,15.7,8,6,5.7,5.7,3.3,2.3,2,1.7,.5,.5,.5,.5,-2,-3,-2,-2.5,-4,-1],['g',4,4,1],['r',-3,-1.5],
    ['g',2.5,2.5,9,17,22.5,30,40,44,47,49,49,50,50,50,48],['r',43,38,37,36,37,36,30,26,23,21,20,16,14,14,18],
    ['g',22,25,27,29,29,31,32,33,35,35,32,31,31,31],['r',28,26,26,27],['g',29,28],
    ['r',22,19,14,9,7,5,2,.5,2,1,-2,-3,-6,-10,-11,-12,-14,-16,-16,-16,-17,-19,-28,-33,-35,-35,-36,-35,-35,-34,-33],
    ['g',-31,-29,-25,-24,-25,-25,-26,-24,-17,-14,-13,-9,-6,-6,-7]
  ];
  var i = 0, zero = 621.7;
  macd.forEach(function (run) {
    for (var j = 1; j < run.length; j++) {
      var v = run[j], x = 2.7 + 5.57 * i++;
      el('rect', { x: x - 2, y: v > 0 ? zero - v : zero, width: 4, height: Math.abs(v), 'class': 'macd-' + run[0] });
    }
  });
  el('line', { x1: 0, y1: 622, x2: 1295, y2: 622, 'class': 'zero' });
  var sig = conv(0,480,3,3,[0,437,50,440,110,440,180,425,230,410,300,407,340,420,400,460,470,500,530,525,590,520,670,497,760,430,820,395,880,377])
    .concat(conv(300,560,2.178,3,[0,130,50,110,90,92,120,95,160,125,200,150,250,165,300,178,350,185,400,188,440,182,480,150,530,90,580,55,620,57,680,70,720,95,770,122,820,112,900,92,950,92,1030,103,1080,125,1120,153,1180,182,1250,225,1300,265,1350,280,1400,282,1450,268,1490,263,1530,245,1568,225]))
    .concat(conv(1000,400,3,3,[40,705,73,703]));
  el('path', { d: smooth(sig), 'class': 'signal' });

  // Axis ticks, left and right
  var y;
  for (y = 62; y < 562; y += 18.2) {
    el('line', { x1: 1295, y1: y, x2: 1299, y2: y, 'class': 'tick' }, ticks);
    el('line', { x1: 1, y1: y, x2: 4, y2: y, 'class': 'tick' }, ticks);
  }
  for (y = 569; y < 680; y += 5.2) {
    var major = Math.round((y - 569) / 5.2) % 5 === 0;
    el('line', { x1: 1295, y1: y, x2: major ? 1299 : 1297, y2: y, 'class': 'tick' }, ticks);
    if (Math.round((y - 569) / 5.2) % 3 === 0) el('line', { x1: 1, y1: y, x2: 3, y2: y, 'class': 'tick' }, ticks);
  }

  // Session colour strip below the MACD pane
  var strip = document.getElementById('strip');
  [[12,16,'#1a2a90'],[16,149,'#b8a81a'],[149,282,'#1ba0b8'],[282,416,'#12a020'],[416,548,'#8a1a1a'],[548,682,'#101a88'],[682,810,'#b8981a'],[810,943,'#1ba0b8'],[943,1028,'#12a020']].forEach(function (s) {
    el('line', { x1: s[0], y1: 681.5, x2: s[1], y2: 681.5, stroke: s[2], 'stroke-width': 1.4 }, strip);
  });
})();
```
